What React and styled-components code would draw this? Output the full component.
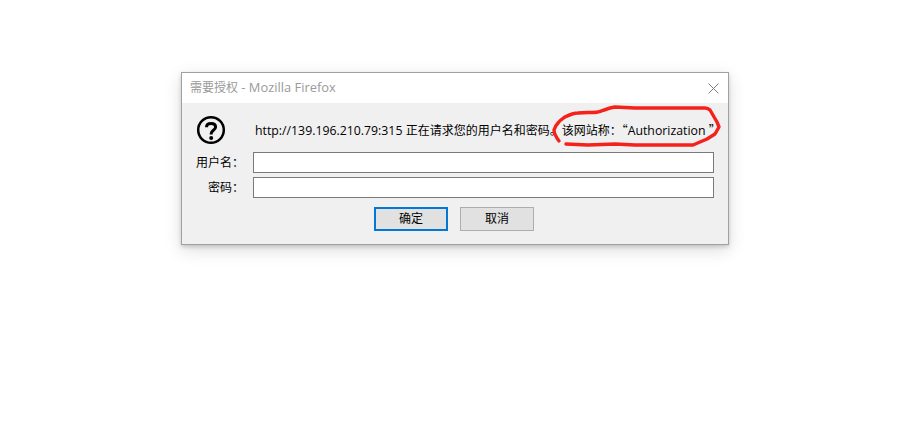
import React from "react";
import styled, { createGlobalStyle } from "styled-components";

const GlobalStyle = createGlobalStyle`
  html, body {
    margin: 0;
    padding: 0;
    background: #fff;
  }
`;

const Page = styled.div`
  position: relative;
  width: 921px;
  height: 446px;
  padding: 72px 0 0 181px;
  box-sizing: border-box;
  overflow: hidden;
  font-family: "Noto Sans CJK SC", sans-serif;
  font-size: 12px;
  color: #000;
`;

const Dialog = styled.div`
  width: 548px;
  height: 173px;
  box-sizing: border-box;
  border: 1px solid #a0a0a0;
  background: #f0f0f0;
  box-shadow: 0 2px 4px rgba(0, 0, 0, 0.16), 0 5px 16px rgba(0, 0, 0, 0.14);
  display: flex;
  flex-direction: column;
`;

const TitleBar = styled.div`
  height: 30px;
  background: #fff;
  display: flex;
  align-items: center;
  justify-content: space-between;
  padding: 0 9px 0 8px;
  flex-shrink: 0;
`;

const Title = styled.span`
  color: #9a9a9a;
  line-height: 28px;
  height: 28px;
  margin-bottom: 2px;
`;

const TitleLatin = styled.span`
  font-family: "Open Sans", sans-serif;
  font-size: 12.9px;
`;

const Latin = styled.span`
  font-family: "Open Sans", sans-serif;
  font-size: 12.3px;
`;

const Body = styled.div`
  flex: 1;
  display: flex;
  flex-direction: column;
`;

const Message = styled.div`
  height: 49px;
  box-sizing: border-box;
  display: flex;
  align-items: center;
  padding: 5px 0 0 14px;
  flex-shrink: 0;
`;

const MessageText = styled.span`
  margin-left: 29px;
  white-space: nowrap;
`;

const Row = styled.div`
  display: flex;
  align-items: center;
  height: 21px;
  margin-bottom: 4px;
`;

const Label = styled.label`
  width: 62px;
  text-align: right;
  white-space: nowrap;
  line-height: 19px;
  height: 19px;
  margin-bottom: 2px;
`;

const Input = styled.input`
  width: 461px;
  height: 21px;
  margin: 0 0 0 9px;
  padding: 0 3px;
  box-sizing: border-box;
  border: 1px solid #7a7a7a;
  border-radius: 0;
  background: #fff;
  outline: none;
`;

const Buttons = styled.div`
  display: flex;
  gap: 12px;
  padding-left: 192px;
  margin-top: 5px;
`;

const Button = styled.button`
  width: 74px;
  height: 24px;
  padding: 0 0 3px;
  box-sizing: border-box;
  border: ${(props) => (props.$primary ? "2px solid #0078d7" : "1px solid #adadad")};
  border-radius: 0;
  background: #e1e1e1;
  color: #000;
  font-family: inherit;
  font-size: 12px;
`;

const Scribble = styled.svg`
  position: absolute;
  left: 0;
  top: 0;
  width: 921px;
  height: 446px;
  pointer-events: none;
`;

const HelpIcon = () => (
  <svg width="30" height="30" viewBox="0 0 30 30" fill="none" stroke="#000">
    <circle cx="15" cy="15" r="12.8" strokeWidth="2.5" />
    <path
      d="M10.5 12.2C10.5 9.6 12.4 8.4 15 8.4c2.7 0 4.6 1.4 4.6 3.6 0 3.2-4.4 3.3-4.4 6.6v.8"
      strokeWidth="3"
    />
    <circle cx="15.2" cy="23" r="2" fill="#000" stroke="none" />
  </svg>
);

const CloseIcon = () => (
  <svg width="11" height="11" viewBox="0 0 11 11" stroke="#7c7c7c" strokeWidth="1">
    <path d="M.5.5l10 10M10.5.5l-10 10" />
  </svg>
);

const App = () => (
  <Page>
    <GlobalStyle />
    <Dialog>
      <TitleBar>
        <Title>
          需要授权<TitleLatin> - Mozilla Firefox</TitleLatin>
        </Title>
        <CloseIcon />
      </TitleBar>
      <Body>
        <Message>
          <HelpIcon />
          <MessageText>
            <Latin>http://139.196.210.79:315 </Latin>正在请求您的用户名和密码。该网站称：“
            <Latin>Authorization </Latin>”
          </MessageText>
        </Message>
        <Row>
          <Label>用户名：</Label>
          <Input type="text" />
        </Row>
        <Row>
          <Label>密码：</Label>
          <Input type="password" />
        </Row>
        <Buttons>
          <Button $primary>确定</Button>
          <Button>取消</Button>
        </Buttons>
      </Body>
    </Dialog>
    <Scribble viewBox="0 0 921 446" fill="none" stroke="#f5211b" strokeWidth="3.4" strokeLinecap="round" strokeLinejoin="round">
      <path d="M559 141C556 137 554 133 554 130C555 127 556 125 558 123C560 120 562 119 565 117C569 115 573 113 578 113C585 112 592 113 598 112C604 110 609 108 615 107L635 108L705 108C707 108 709 109 710 110L717 122L719 127L715 134L707 139L693 145L635 145L615 144L588 145L566 144" />
    </Scribble>
  </Page>
);

export default App;
